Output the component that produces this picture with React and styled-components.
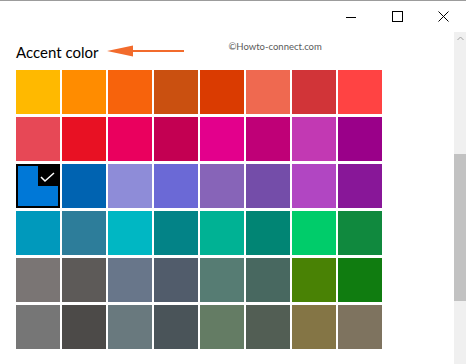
import React from "react";
import styled, { createGlobalStyle } from "styled-components";

const Global = createGlobalStyle`
  html, body { margin: 0; padding: 0; background: #fff; }
  body { font-family: "Lato", "Open Sans", sans-serif; }
`;

const Window = styled.div`
  width: 466px;
  height: 364px;
  overflow: hidden;
  box-sizing: border-box;
  border-top: 1px solid #9c9c9c;
  display: flex;
  flex-direction: column;
  background: #fff;
`;

const TitleBar = styled.div`
  height: 31px;
  display: flex;
  justify-content: flex-end;
`;

const CaptionButton = styled.div`
  width: 46px;
  height: 31px;
  display: flex;
  align-items: center;
  justify-content: center;
  color: #000;
`;

const Main = styled.div`
  flex: 1;
  display: flex;
  min-height: 0;
`;

const Content = styled.div`
  flex: 1;
  padding-left: 16px;
  display: flex;
  flex-direction: column;
`;

const HeaderRow = styled.div`
  height: 38px;
  display: flex;
  align-items: center;
`;

const Heading = styled.h2`
  margin: 0;
  font-weight: 400;
  font-size: 15px;
  line-height: 22px;
  color: #000;
  margin-top: 2px;
  font-family: "Lato", "Open Sans", sans-serif;
`;

const ArrowMark = styled.svg`
  margin-left: 9px;
  display: block;
`;

const Watermark = styled.span`
  margin-left: 44px;
  margin-bottom: 9px;
  font-size: 9.5px;
  color: #5a5a5a;
  font-family: "Lato", "Open Sans", sans-serif;
`;

const Grid = styled.div`
  display: grid;
  grid-template-columns: repeat(8, 44px);
  grid-auto-rows: 44px;
  column-gap: 2px;
  row-gap: 3px;
`;

const Swatch = styled.div`
  position: relative;
  background: ${(p) => p.$color};
  box-sizing: border-box;
  border: ${(p) => (p.$selected ? "2px solid #000" : "none")};
`;

const CheckBadge = styled.div`
  position: absolute;
  top: 0;
  right: 0;
  width: 20px;
  height: 20px;
  background: #000;
  display: flex;
  align-items: center;
  justify-content: center;
`;

const ScrollTrack = styled.div`
  width: 12px;
  background: #f0f0f0;
  display: flex;
  flex-direction: column;
  align-items: center;
`;

const ScrollArrow = styled.div`
  height: 16px;
  width: 12px;
  display: flex;
  justify-content: center;
  padding-top: 4px;
  box-sizing: border-box;
`;

const ScrollThumb = styled.div`
  margin-top: 106px;
  width: 12px;
  height: 147px;
  background: #c2c2c2;
`;

const rows = [
  ["#FFB900", "#FF8C00", "#F7630C", "#CA5010", "#DA3B01", "#EF6950", "#D13438", "#FF4343"],
  ["#E74856", "#E81123", "#EA005E", "#C30052", "#E3008C", "#BF0077", "#C239B3", "#9A0089"],
  ["#0078D7", "#0063B1", "#8E8CD8", "#6B69D6", "#8764B8", "#744DA9", "#B146C2", "#881798"],
  ["#0099BC", "#2D7D9A", "#00B7C3", "#038387", "#00B294", "#018574", "#00CC6A", "#10893E"],
  ["#7A7574", "#5D5A58", "#68768A", "#515C6B", "#567C73", "#486860", "#498205", "#107C10"],
  ["#767676", "#4C4A48", "#69797E", "#4A5459", "#647C64", "#525E54", "#847545", "#7E735F"],
];

export default function App() {
  return (
    <>
      <Global />
      <Window>
        <TitleBar>
          <CaptionButton>
            <svg width="10" height="10" viewBox="0 0 10 10">
              <line x1="0" y1="5.5" x2="10" y2="5.5" stroke="#000" strokeWidth="1" />
            </svg>
          </CaptionButton>
          <CaptionButton>
            <svg width="11" height="11" viewBox="0 0 11 11">
              <rect x="0.5" y="0.5" width="10" height="10" fill="none" stroke="#000" strokeWidth="1" />
            </svg>
          </CaptionButton>
          <CaptionButton>
            <svg width="11" height="11" viewBox="0 0 11 11">
              <path d="M0.5 0.5 L10.5 10.5 M10.5 0.5 L0.5 10.5" stroke="#000" strokeWidth="1" fill="none" />
            </svg>
          </CaptionButton>
        </TitleBar>
        <Main>
          <Content>
            <HeaderRow>
              <Heading>Accent color</Heading>
              <ArrowMark width="77" height="12" viewBox="0 0 77 12">
                <path d="M0 6 L26 0.5 L26 11.5 Z" fill="#F26B2C" />
                <rect x="20" y="5" width="57" height="2" fill="#F26B2C" />
              </ArrowMark>
              <Watermark>©Howto-connect.com</Watermark>
            </HeaderRow>
            <Grid>
              {rows.flat().map((c, i) => (
                <Swatch key={i} $color={c} $selected={i === 16}>
                  {i === 16 && (
                    <CheckBadge>
                      <svg width="20" height="20" viewBox="0 0 20 20">
                        <polyline points="3,11 7,15 16,7" fill="none" stroke="#fff" strokeWidth="1.5" />
                      </svg>
                    </CheckBadge>
                  )}
                </Swatch>
              ))}
            </Grid>
          </Content>
          <ScrollTrack>
            <ScrollArrow>
              <svg width="7" height="5" viewBox="0 0 7 5">
                <polyline points="0.5,4 3.5,1 6.5,4" fill="none" stroke="#a0a0a0" strokeWidth="1" />
              </svg>
            </ScrollArrow>
            <ScrollThumb />
          </ScrollTrack>
        </Main>
      </Window>
    </>
  );
}
